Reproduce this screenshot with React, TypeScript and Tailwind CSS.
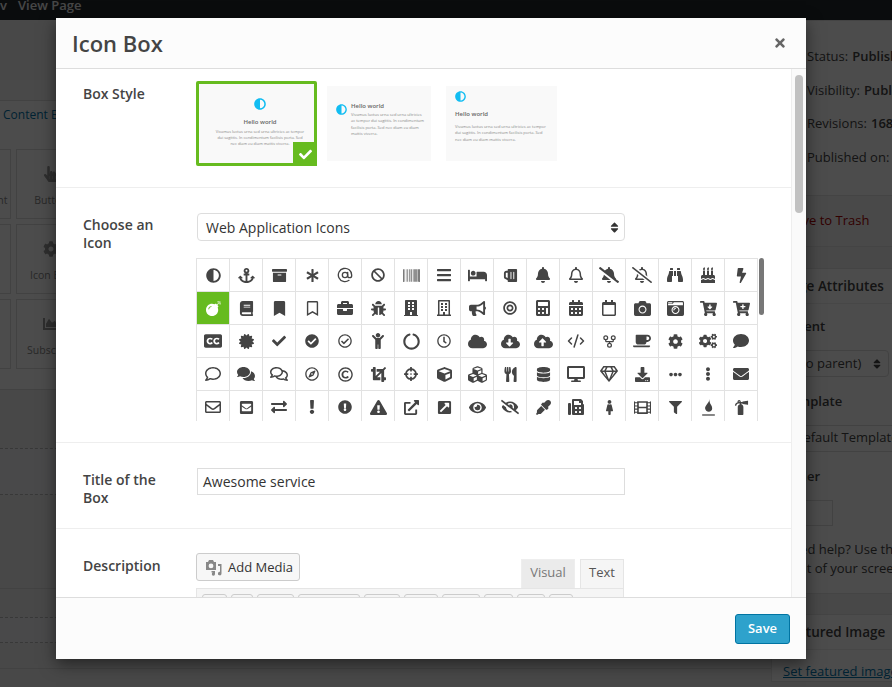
import type { ComponentType } from "react";
import {
  FaAdjust, FaAnchor, FaArchive, FaAsterisk, FaBan, FaBarcode, FaBars, FaBed, FaBeer, FaBell, FaRegBell,
  FaBellSlash, FaRegBellSlash, FaBinoculars, FaBirthdayCake, FaBolt, FaBomb, FaBook, FaBookmark, FaRegBookmark,
  FaBriefcase, FaBug, FaBuilding, FaRegBuilding, FaBullhorn, FaBullseye, FaCalculator, FaCalendarAlt, FaRegCalendar,
  FaCamera, FaCameraRetro, FaCartArrowDown, FaCartPlus, FaClosedCaptioning, FaCertificate, FaCheck, FaCheckCircle,
  FaRegCheckCircle, FaChild, FaCircleNotch, FaRegClock, FaCloud, FaCloudDownloadAlt, FaCloudUploadAlt,
  FaCoffee, FaCog, FaCogs, FaComment, FaRegComment, FaComments, FaRegComments, FaRegCompass,
  FaRegCopyright, FaCrop, FaCrosshairs, FaCube, FaCubes, FaUtensils, FaDatabase, FaDesktop, FaRegGem, FaDownload,
  FaEllipsisH, FaEllipsisV, FaEnvelope, FaRegEnvelope, FaEnvelopeSquare, FaExchangeAlt, FaExclamation,
  FaExclamationCircle, FaExclamationTriangle, FaExternalLinkAlt, FaExternalLinkSquareAlt, FaEye, FaEyeSlash,
  FaEyeDropper, FaFax, FaFemale, FaFilm, FaFilter, FaFireExtinguisher, FaTimes, FaSort, FaHandPointer,
  FaChartArea,
} from "react-icons/fa";
import { AtSign, CodeXml, GitFork } from "lucide-react";

type IconProps = { size?: number; className?: string; strokeWidth?: number };
type GridIcon = [ComponentType<IconProps>, number, string?];

function FireLine({ size = 16 }: IconProps) {
  return (
    <svg viewBox="0 0 16 18" width={size} height={size} fill="currentColor">
      <path d="M8.500 1c.6 2.500-1 3.600-2.300 5.300C5 7.800 4.500 9 4.900 10.400c.4 1.500 1.800 2.600 3.300 2.600 1.900 0 3.300-1.500 3.300-3.400 0-2.400-1.900-3.600-2.300-5.600-.2-1-.3-1.800-.7-3z" />
      <rect x="2" y="15.500" width="12" height="1.200" />
    </svg>
  );
}

// react-icons squeezes wide glyphs into a square box, so the wide ones get a bigger size
const ICONS: GridIcon[] = [
  [FaAdjust, 15], [FaAnchor, 17], [FaArchive, 15], [FaAsterisk, 13], [AtSign, 16], [FaBan, 14], [FaBarcode, 17], [FaBars, 16],
  [FaBed, 19], [FaBeer, 15, "-scale-x-100"], [FaBell, 16], [FaRegBell, 16], [FaBellSlash, 20], [FaRegBellSlash, 20], [FaBinoculars, 16], [FaBirthdayCake, 16], [FaBolt, 15],
  [FaBomb, 15], [FaBook, 15], [FaBookmark, 15], [FaRegBookmark, 15], [FaBriefcase, 16], [FaBug, 15], [FaBuilding, 16], [FaRegBuilding, 16], [FaBullhorn, 17],
  [FaBullseye, 14], [FaCalculator, 16], [FaCalendarAlt, 16], [FaRegCalendar, 16], [FaCamera, 17], [FaCameraRetro, 17], [FaCartArrowDown, 17], [FaCartPlus, 17],
  [FaClosedCaptioning, 18], [FaCertificate, 15], [FaCheck, 14], [FaCheckCircle, 14], [FaRegCheckCircle, 14], [FaChild, 16], [FaCircleNotch, 17], [FaRegClock, 14],
  [FaCloud, 19], [FaCloudDownloadAlt, 19], [FaCloudUploadAlt, 19], [CodeXml, 18], [GitFork, 15], [FaCoffee, 18], [FaCog, 15], [FaCogs, 18], [FaComment, 16],
  [FaRegComment, 16], [FaComments, 18], [FaRegComments, 18], [FaRegCompass, 14], [FaRegCopyright, 15], [FaCrop, 15], [FaCrosshairs, 14], [FaCube, 15], [FaCubes, 19],
  [FaUtensils, 15], [FaDatabase, 15], [FaDesktop, 18], [FaRegGem, 18], [FaDownload, 15], [FaEllipsisH, 13], [FaEllipsisV, 14], [FaEnvelope, 16],
  [FaRegEnvelope, 16], [FaEnvelopeSquare, 15], [FaExchangeAlt, 16], [FaExclamation, 14], [FaExclamationCircle, 14], [FaExclamationTriangle, 17],
  [FaExternalLinkAlt, 15], [FaExternalLinkSquareAlt, 15], [FaEye, 17], [FaEyeSlash, 18], [FaEyeDropper, 15], [FaFax, 16], [FaFemale, 15], [FaFilm, 17], [FaFilter, 13],
  [FireLine, 19], [FaFireExtinguisher, 15],
];

const TOOLBAR_WIDTHS = ["w-[25px]", "w-[22px]", "w-[37px]", "w-[62px]", "w-[36px]", "w-[34px]", "w-[38px]", "w-[29px]", "w-[28px]", "w-[24px]"];

const BLURB = "Vivamus luctus urna sed urna ultricies ac tempor dui sagittis. In condimentum facilisis porta. Sed nec diam eu diam mattis viverra.";

function BackgroundPage() {
  return (
    <div className="flex h-[687px] w-[892px] flex-col overflow-hidden bg-[#f1f1f1] text-[13px] text-[#444]">
      <div className="flex h-[20px] shrink-0 items-start gap-[11px] bg-[#23282d] text-[13px] font-semibold leading-[10px] text-[#eee]">
        <span>v</span>
        <span>View Page</span>
      </div>
      <div className="flex min-h-0 flex-1">
        <div className="w-[771px] shrink-0">
          <div className="h-[60px]" />
          <div className="h-[21px] border-b border-[#ddd] bg-[#f5f5f5]" />
          <div className="h-[288px] bg-white">
            <div className="flex h-[28px] items-center pl-[3px] text-[12px] text-[#0073aa]">Content Blocks</div>
            <div className="mt-[20px] ml-[-59px] grid w-[300px] grid-cols-[70px_70px] gap-[5px] border-b border-[#ddd] pb-[20px]">
              <Cell label="Text Content" />
              <Cell label="Button" icon={<FaHandPointer size={16} />} />
              <Cell />
              <Cell label="Icon Box" icon={<FaCog size={16} />} />
              <Cell />
              <Cell label="Subscribe" icon={<FaChartArea size={16} />} />
            </div>
          </div>
          <div className="h-[59px]" />
          <div className="h-[47px] border-y border-dashed border-[#bbb] bg-[#f3f6f7]" />
          <div className="h-[94px] border-b border-[#ddd]" />
          <div className="mt-[28px] h-[26px] border-y border-dashed border-[#bbb] bg-[#f3f6f7]" />
          <div className="h-[26px] border-b border-[#ddd]" />
        </div>

        <div className="w-[280px] shrink-0">
          <div className="border border-[#e5e5e5] bg-white">
            <div className="border-b border-[#e5e5e5] pb-[20px] pl-[35px] pt-[19px]">
              <SideRow label="Status:" value="Published" />
              <SideRow label="Visibility:" value="Public" />
              <SideRow label="Revisions:" value="168" />
              <SideRow label="Published on:" value="" />
            </div>
            <div className="flex h-[50px] items-center bg-[#f5f5f5] pl-[11px] text-[#a00]">Move to Trash</div>
          </div>
          <div className="mt-[21px] border border-[#e5e5e5] bg-white">
            <div className="flex h-[35px] items-center border-b border-[#eee] pl-[11px] text-[13.5px] font-semibold">Page Attributes</div>
            <div className="px-[11px] pb-[15px]">
              <p className="mt-[12px] font-semibold leading-[20px]">Parent</p>
              <div className="mt-[14px] flex h-[27px] w-[106px] items-center justify-between rounded-[4px] border border-[#ddd] pl-[10px] pr-[5px] pt-[1px]">
                <span>(no parent)</span>
                <FaSort size={12} />
              </div>
              <p className="mt-[14px] font-semibold leading-[20px]">Template</p>
              <div className="mt-[14px] flex h-[27px] w-[200px] items-center border border-[#ddd] pl-[10px]">Default Template</div>
              <p className="mt-[14px] font-semibold leading-[20px]">Order</p>
              <div className="mt-[14px] h-[26px] w-[50px] border border-[#ddd]" />
              <p className="mt-[14px] leading-[19px]">Need help? Use the Help tab in the upper right of your screen.</p>
            </div>
          </div>
          <div className="mt-[20px] border border-[#e5e5e5] bg-white">
            <div className="flex h-[35px] items-center border-b border-[#eee] pl-[11px] text-[13.5px] font-semibold">Featured Image</div>
            <p className="mt-[12px] pl-[11px] text-[#0073aa] underline">Set featured image</p>
          </div>
        </div>
      </div>
    </div>
  );
}

function Cell({ label, icon }: { label?: string; icon?: React.ReactNode }) {
  return (
    <div className="flex h-[70px] flex-col items-center justify-end whitespace-nowrap border border-[#ddd] pb-[11px] text-[10.5px] leading-[14px] text-[#888]">
      {icon && <div className="mb-[11px] text-[#999]">{icon}</div>}
      {label}
    </div>
  );
}

function SideRow({ label, value }: { label: string; value: string }) {
  return (
    <p className="flex h-[33.67px] items-center gap-[4px] whitespace-nowrap">
      {label} <b className="font-semibold">{value}</b>
    </p>
  );
}

function BoxThumb({ layout }: { layout: "center" | "side" | "left" }) {
  if (layout === "center") {
    return (
      <div className="flex h-full flex-col items-center bg-[#f9f9f9] pl-[7px] pt-[14px] text-center">
        <FaAdjust size={12} className="text-[#12bdf2]" />
        <p className="mt-[8px] text-[6px] font-semibold leading-[8px] text-[#666]">Hello world</p>
        <p className="mt-[3px] w-[92px] text-[3.9px] leading-[6.2px] text-[#888]">{BLURB}</p>
      </div>
    );
  }
  if (layout === "side") {
    return (
      <div className="flex h-full gap-[4px] bg-[#f9f9f9] pl-[9px] pr-[6px] pt-[16px]">
        <FaAdjust size={11} className="mt-[2px] shrink-0 text-[#12bdf2]" />
        <div>
          <p className="text-[6px] font-semibold leading-[8px] text-[#666]">Hello world</p>
          <p className="mt-[2px] text-[4px] leading-[6.3px] text-[#888]">{BLURB}</p>
        </div>
      </div>
    );
  }
  return (
    <div className="h-full bg-[#f9f9f9] pl-[9px] pr-[9px] pt-[5px]">
      <FaAdjust size={11} className="text-[#12bdf2]" />
      <p className="mt-[8px] text-[6px] font-semibold leading-[8px] text-[#666]">Hello world</p>
      <p className="mt-[6px] text-[4px] leading-[6.4px] text-[#888]">{BLURB}</p>
    </div>
  );
}

function MediaIcon() {
  return (
    <svg viewBox="0 0 17 17" className="size-[17px] fill-[#888]">
      <path d="M1 3h2l1-2h4l1 2h2v8H1zM6 4.500a2.400 2.400 0 1 0 0 4.800 2.400 2.400 0 0 0 0-4.800z" />
      <path d="M13 5h3.500v9.500a1.800 1.800 0 1 1-1.500-1.700V7h-2zM6.500 12h3.500v3a1.600 1.600 0 1 1-1.300-1.500V13.500H6.500z" />
    </svg>
  );
}

function Modal() {
  return (
    <div className="flex h-[641px] w-[750px] flex-col bg-white shadow-[0_5px_15px_rgba(0,0,0,0.5)]">
      <div className="flex h-[51px] shrink-0 items-center justify-between border-b border-[#ddd] bg-[#fcfcfc] pl-[16px] pr-[19px]">
        <h1 className="text-[22px] font-semibold text-[#444]">Icon Box</h1>
        <FaTimes size={14} className="text-[#666]" />
      </div>

      <div className="flex min-h-0 flex-1">
        <div className="min-w-0 flex-1 overflow-hidden">
          <section className="flex h-[119px] border-b border-[#eee] pl-[27px] pt-[12px]">
            <h2 className="mt-[3px] w-[113px] text-[14px] font-semibold leading-[20px] text-[#444]">Box Style</h2>
            <div className="flex items-start">
              <div className="relative h-[85px] w-[121px] rounded-[2px] border-[3px] border-[#66bb1f]">
                <BoxThumb layout="center" />
                <span className="absolute -bottom-[3px] -right-[3px] flex size-[24px] items-center justify-center bg-[#66bb1f] text-white">
                  <FaCheck size={13} />
                </span>
              </div>
              <div className="ml-[10px] mt-[5px] h-[75px] w-[104px]">
                <BoxThumb layout="side" />
              </div>
              <div className="ml-[15px] mt-[5px] h-[75px] w-[111px]">
                <BoxThumb layout="left" />
              </div>
            </div>
          </section>

          <section className="flex h-[255px] border-b border-[#eee] pl-[27px] pt-[25px]">
            <h2 className="mt-[3px] w-[113px] text-[14px] font-semibold leading-[18px] text-[#444]">Choose an<br />Icon</h2>
            <div>
              <div className="ml-[1px] flex h-[28px] w-[428px] items-center justify-between rounded-[4px] border border-[#ddd] pl-[8px] pr-[3px] text-[14px] text-[#333]">
                <span>Web Application Icons</span>
                <FaSort size={13} className="text-[#333]" />
              </div>
              <div className="mt-[17px] flex gap-[1px]">
                <div className="h-[163px] overflow-hidden">
                  <div className="grid w-[562px] grid-cols-[repeat(17,33px)] border-l border-t border-[#e2e2e2]">
                    {ICONS.map(([Icon, size, extra], i) => (
                      <div key={i} className={`flex h-[33px] items-center justify-center border-b border-r border-[#e2e2e2] ${i === 17 ? "bg-[#66bb1f] text-white" : "text-[#444]"}`}>
                        <Icon size={size} className={extra} />
                      </div>
                    ))}
                  </div>
                </div>
                <div className="h-[57px] w-[5px] rounded-[3px] bg-[#777]" />
              </div>
            </div>
          </section>

          <section className="flex h-[86px] border-b border-[#eee] pl-[27px] pt-[25px]">
            <h2 className="mt-[3px] w-[113px] text-[14px] font-semibold leading-[18px] text-[#444]">Title of the<br />Box</h2>
            <div className="ml-[1px] flex h-[27px] w-[428px] items-center border border-[#ddd] pl-[5px] text-[14px] text-[#333]">Awesome service</div>
          </section>

          <section className="flex pl-[27px] pt-[24px]">
            <h2 className="mt-[3px] w-[113px] text-[14px] font-semibold leading-[20px] text-[#444]">Description</h2>
            <div className="w-[428px]">
              <div className="flex items-end justify-between">
                <div className="mb-[7px] flex h-[28px] w-[104px] items-center gap-[6px] rounded-[3px] border border-[#ccc] bg-[#f7f7f7] pl-[8px] text-[13px] text-[#333]">
                  <MediaIcon />
                  <span className="mt-[1px]">Add Media</span>
                </div>
                <div className="flex gap-[5px] text-[13px]">
                  <span className="flex h-[29px] w-[54px] items-center justify-center border border-b-0 border-[#eee] bg-[#ebebeb] pb-[2px] text-[#777]">Visual</span>
                  <span className="flex h-[29px] w-[44px] items-center justify-center border border-b-0 border-[#e5e5e5] bg-[#f5f5f5] pb-[2px] text-[#555]">Text</span>
                </div>
              </div>
              <div className="flex h-[40px] gap-[4px] border border-[#e5e5e5] bg-[#f5f5f5] pl-[5px] pt-[5px]">
                {TOOLBAR_WIDTHS.map((w, i) => (
                  <span key={i} className={`${w} h-[24px] rounded-[3px] border border-[#ccc]`} />
                ))}
              </div>
            </div>
          </section>
        </div>

        <div className="w-[15px] shrink-0 border-l border-[#eee] bg-[#fafafa] pl-[3px] pt-[6px]">
          <div className="h-[138px] w-[8px] rounded-[4px] bg-[#c1c1c1]" />
        </div>
      </div>

      <div className="flex h-[62px] shrink-0 items-center justify-end border-t border-[#ddd] bg-[#fcfcfc] pr-[16px]">
        <button className="h-[30px] w-[55px] rounded-[3px] border border-[#0074a2] bg-[#2ea2cc] text-[13px] font-semibold text-white">Save</button>
      </div>
    </div>
  );
}

export default function App() {
  return (
    <div className="relative h-[687px] w-[892px] overflow-hidden font-['Open_Sans',sans-serif]">
      <BackgroundPage />
      <div className="absolute inset-0 bg-black/70 pl-[56px] pt-[18px]">
        <Modal />
      </div>
    </div>
  );
}
